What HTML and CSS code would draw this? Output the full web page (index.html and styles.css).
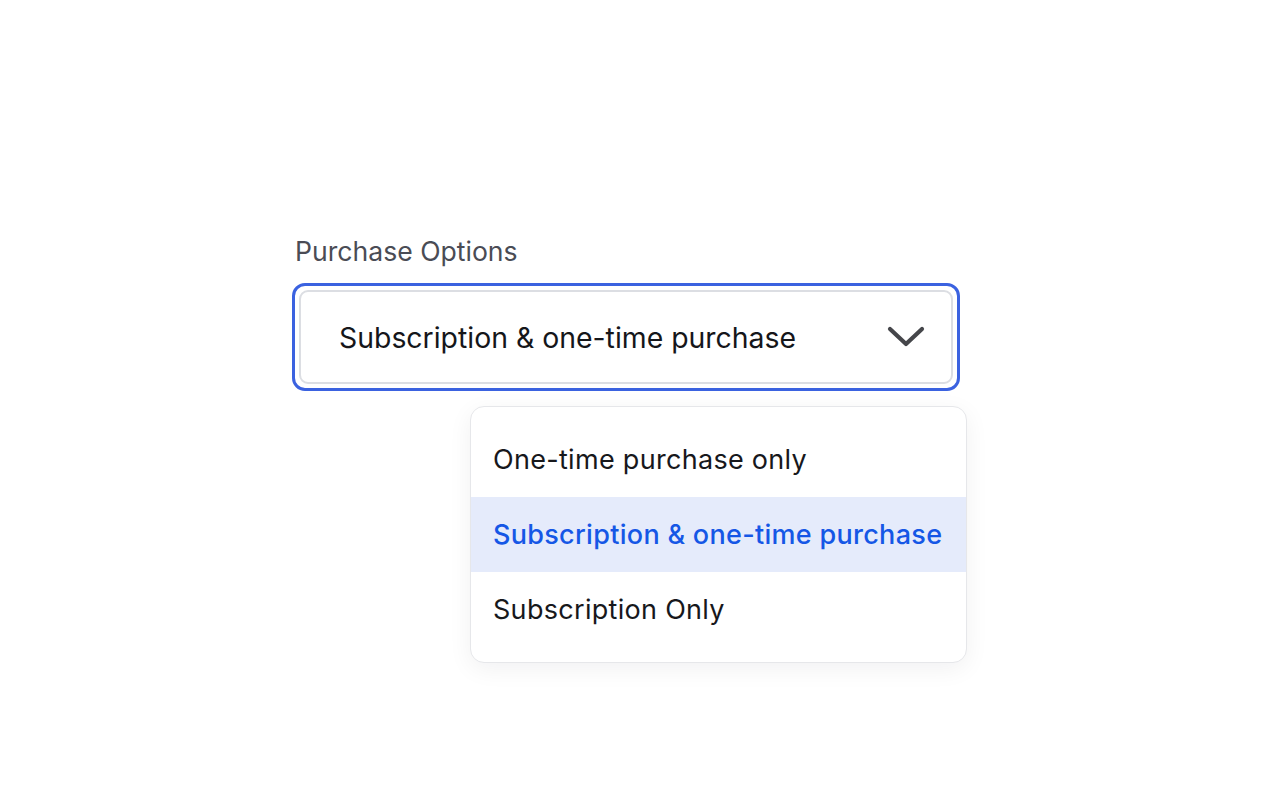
FILE: index.html
```html
<!DOCTYPE html>
<html lang="en">
<head>
<meta charset="utf-8">
<title>Purchase Options</title>
<link rel="stylesheet" href="styles.css">
</head>
<body>
<main class="page">
  <div class="field">
    <div class="field-label">Purchase Options</div>
    <div class="select-ring">
      <div class="select-box">
        <span class="select-value">Subscription &amp; one-time purchase</span>
        <svg class="chevron" width="38" height="24" viewBox="0 0 38 24" aria-hidden="true">
          <path d="M3 4 L19 19 L35 4" fill="none" stroke="#45464a" stroke-width="4.2" stroke-linecap="round" stroke-linejoin="round"/>
        </svg>
      </div>
    </div>
    <div class="option-list" role="listbox">
      <div class="option" role="option">One-time purchase only</div>
      <div class="option option-selected" role="option">Subscription &amp; one-time purchase</div>
      <div class="option" role="option">Subscription Only</div>
    </div>
  </div>
</main>
</body>
</html>
```

FILE: styles.css
```css
* {
  box-sizing: border-box;
}

html, body {
  margin: 0;
  background: #ffffff;
}

body {
  min-height: 100vh;
  font-family: Inter, "Noto Sans", "Liberation Sans", sans-serif;
  color: #16171a;
}

.page {
  padding: 234px 0 0 292px;
}

.field {
  width: 668px;
}

.field-label {
  padding-left: 3px;
  margin-bottom: 15px;
  font-size: 26.6px;
  line-height: 34px;
  color: #4a4c55;
}

.select-ring {
  border: 3px solid #3b62e0;
  border-radius: 13px;
  padding: 4px;
}

.select-box {
  display: flex;
  align-items: center;
  justify-content: space-between;
  height: 94px;
  padding: 0 26px 0 38px;
  border: 2px solid #dcdee3;
  border-radius: 9px;
  background: #fff;
}

.select-value {
  font-size: 28.4px;
  color: #15161a;
}

.chevron {
  display: block;
}

/* open dropdown panel, offset under the right part of the field */
.option-list {
  width: 497px;
  margin: 15px 0 0 178px;
  padding: 15px 0;
  background: #fff;
  border: 1px solid #e6e7ea;
  border-radius: 14px;
  box-shadow: 0 6px 24px rgba(20, 24, 40, 0.06);
}

.option {
  height: 75px;
  display: flex;
  align-items: center;
  padding-left: 22px;
  font-size: 27px;
  letter-spacing: 0.3px;
  color: #17181c;
}

.option-selected {
  background: #e5ebfb;
  color: #1557e6;
  font-weight: 500;
}
```
